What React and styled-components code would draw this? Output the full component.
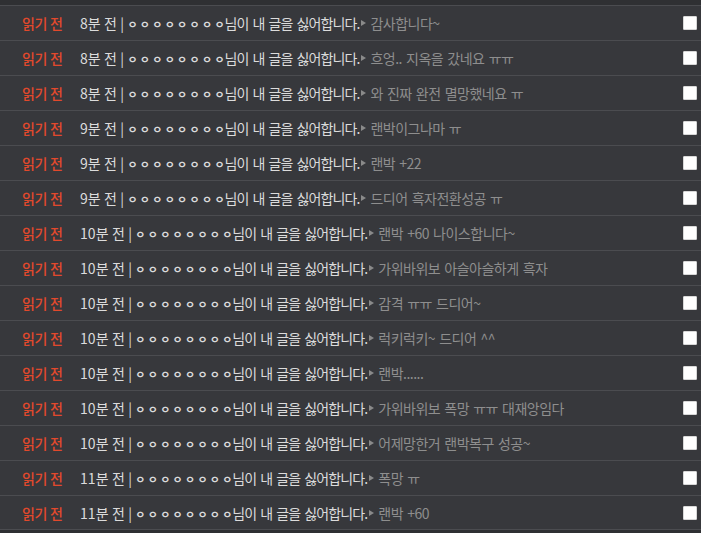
import React from "react";
import styled, { createGlobalStyle } from "styled-components";

const Global = createGlobalStyle`
  html, body { margin: 0; padding: 0; background: #2f3033; }
  body { font-family: "Noto Sans CJK KR", "Noto Sans", sans-serif; }
`;

const List = styled.div`
  padding-top: 5px;
  width: 701px;
  background: #2f3033;
`;

const Row = styled.div`
  display: flex;
  align-items: center;
  height: 34px;
  border-top: 1px solid #4b4c50;
  background: #37383c;
  font-size: 14px;
  &:last-child { border-bottom: 1px solid #4b4c50; height: 33px; }
`;

const Status = styled.span`
  width: 58px;
  padding-left: 22px;
  color: #e2492c;
  font-weight: 500;
  letter-spacing: -0.3px;
  flex: none;
`;

const Main = styled.span`
  color: #dcdcdc;
  white-space: nowrap;
  letter-spacing: 0.1px;
`;

const Nick = styled.span`
  font-size: 11px;
  letter-spacing: 2.3px;
  margin-right: -2.3px;
  font-weight: 700;
`;

const Sentence = styled.span`
  letter-spacing: -0.9px;
  word-spacing: 1.8px;
`;

const Arrow = styled.span`
  width: 0;
  height: 0;
  border-left: 5px solid #8a8a8a;
  border-top: 3.5px solid transparent;
  border-bottom: 3.5px solid transparent;
  margin: 0 4px 0 2px;
  flex: none;
`;

const Comment = styled.span`
  color: #8e8e8e;
  flex: 1;
  white-space: nowrap;
  letter-spacing: -0.5px;
  word-spacing: 1.5px;
`;

const Check = styled.span`
  width: 12px;
  height: 12px;
  background: #fff;
  border-radius: 1px;
  margin-right: 4px;
  flex: none;
  border: 1px solid #d8d8d8;
`;

const rows = [
  ["8분 전", "감사합니다~"],
  ["8분 전", "흐엉.. 지옥을 갔네요 ㅠㅠ"],
  ["8분 전", "와 진짜 완전 멸망했네요 ㅠ"],
  ["9분 전", "랜박이그나마 ㅠ"],
  ["9분 전", "랜박 +22"],
  ["9분 전", "드디어 흑자전환성공 ㅠ"],
  ["10분 전", "랜박 +60 나이스합니다~"],
  ["10분 전", "가위바위보 아슬아슬하게 흑자"],
  ["10분 전", "감격 ㅠㅠ 드디어~"],
  ["10분 전", "럭키럭키~ 드디어 ^^"],
  ["10분 전", "랜박......"],
  ["10분 전", "가위바위보 폭망 ㅠㅠ 대재앙임다"],
  ["10분 전", "어제망한거 랜박복구 성공~"],
  ["11분 전", "폭망 ㅠ"],
  ["11분 전", "랜박 +60"],
];

export default function App() {
  return (
    <>
      <Global />
      <List>
        {rows.map(([time, c], i) => (
          <Row key={i}>
            <Status>읽기 전</Status>
            <Main>
              {time} | <Nick>ㅇㅇㅇㅇㅇㅇㅇㅇ</Nick>
              <Sentence>님이 내 글을 싫어합니다.</Sentence>
            </Main>
            <Arrow />
            <Comment>{c}</Comment>
            <Check />
          </Row>
        ))}
      </List>
    </>
  );
}
